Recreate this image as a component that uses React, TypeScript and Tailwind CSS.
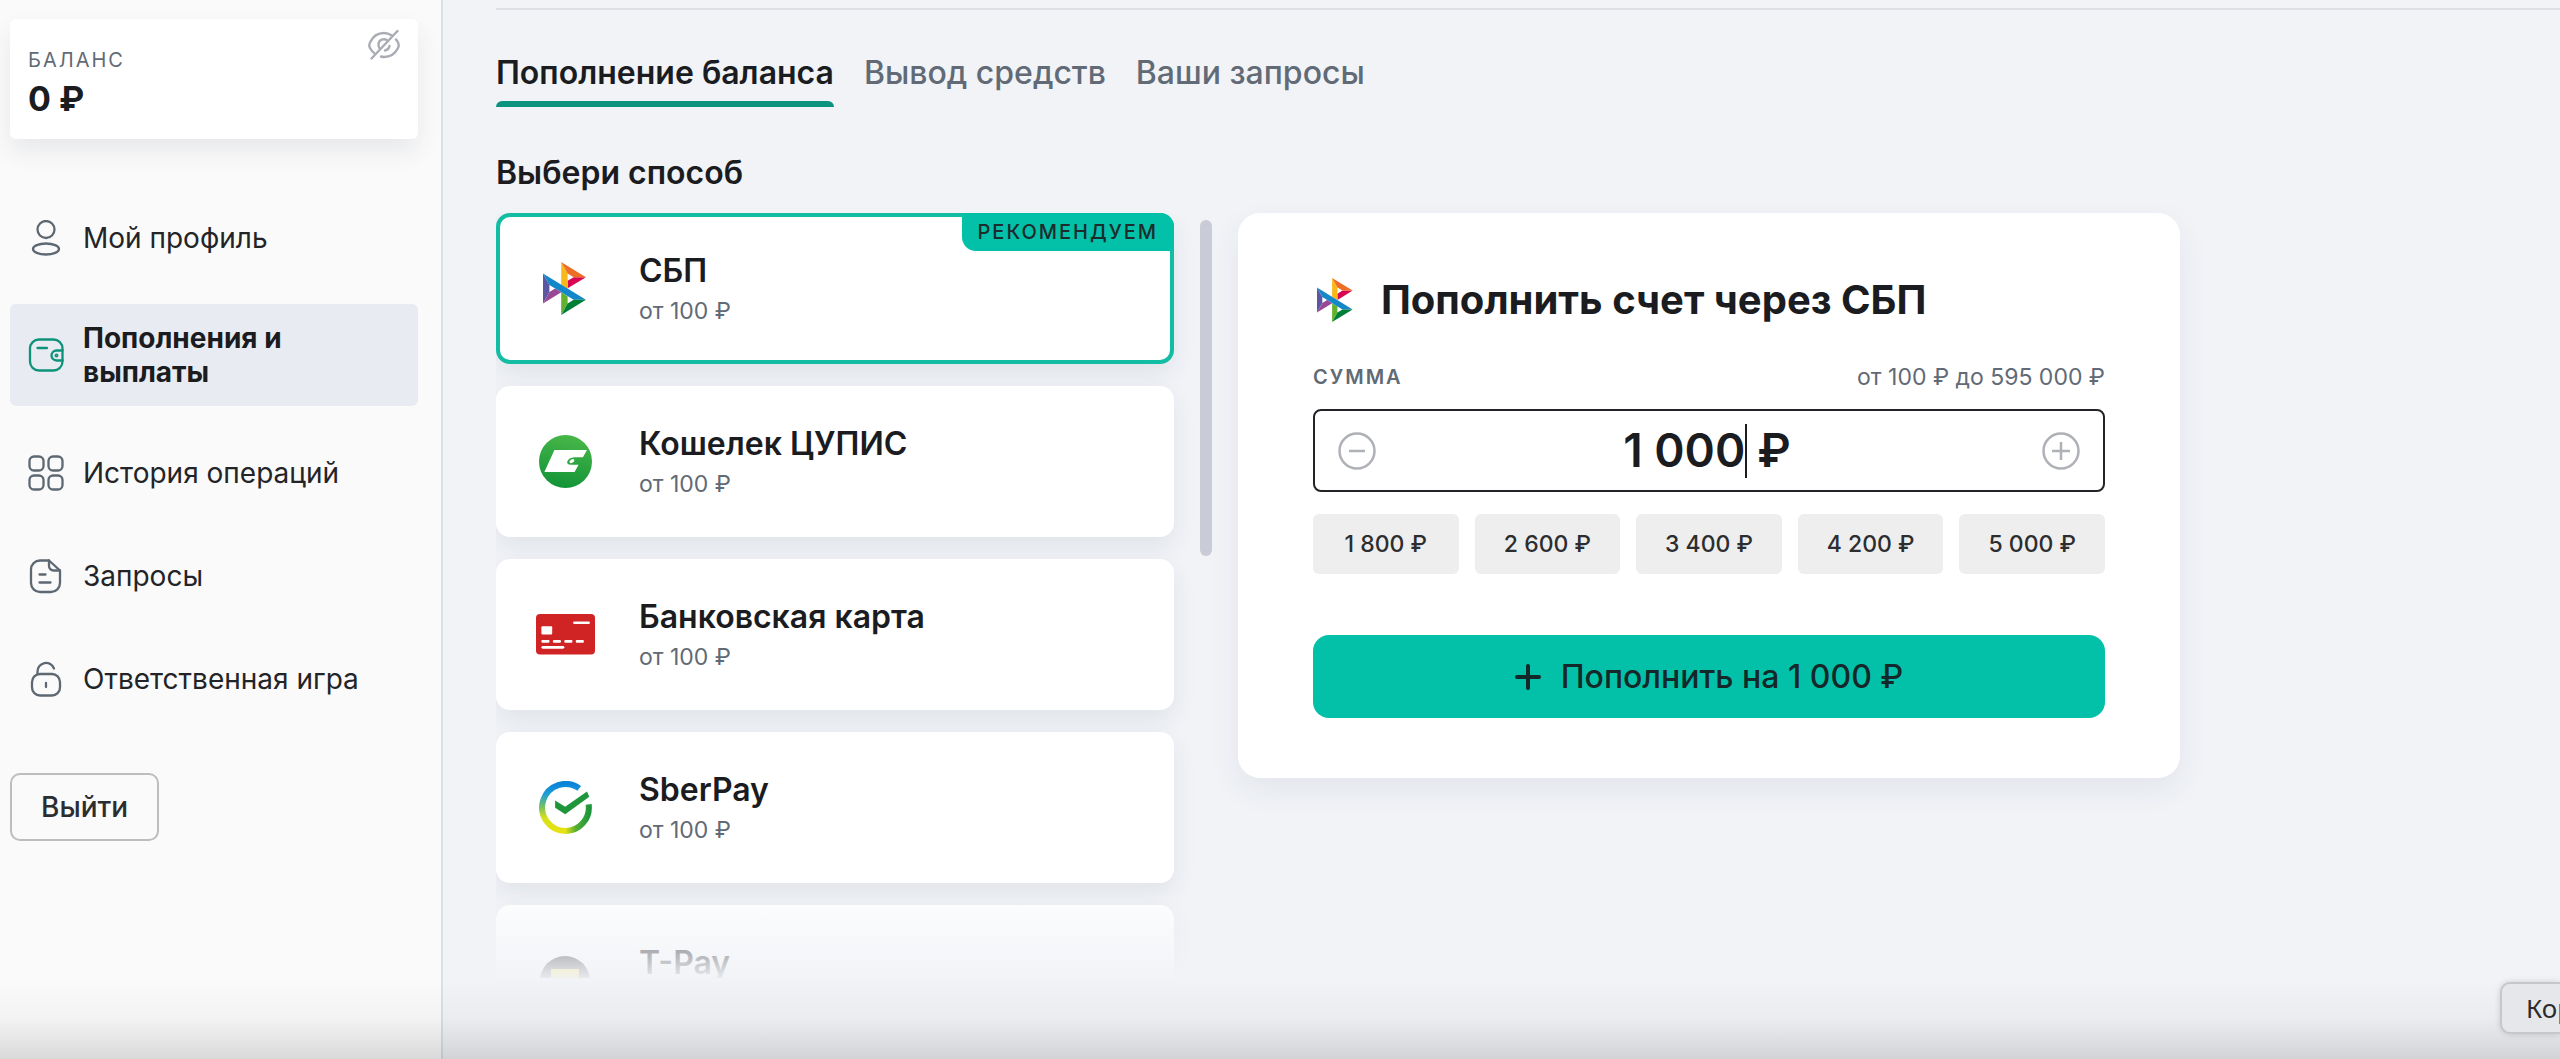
import React, { useState } from 'react';

const SbpLogo: React.FC<{ className?: string }> = ({ className }) => (
  <svg className={className} viewBox="0 0 98 120" aria-hidden="true">
    <path fill="#5B57A2" d="M0 26.12l14.532 25.975v15.844L.017 93.863 0 26.12z" />
    <path fill="#D90751" d="M55.797 42.643l13.617-8.346 27.868-.026-41.485 25.414V42.643z" />
    <path fill="#FAB718" d="M55.72 25.967l.077 34.39-14.566-8.95V0l14.49 25.967z" />
    <path fill="#ED6F26" d="M97.282 34.271l-27.869.026-13.693-8.33L41.231 0l56.05 34.271z" />
    <path fill="#63B22F" d="M55.797 94.007V77.322l-14.566-8.78.008 51.458 14.558-25.993z" />
    <path fill="#1487C9" d="M69.38 85.737L14.531 52.095 0 26.12l97.223 59.583-27.844.034z" />
    <path fill="#017F36" d="M41.24 120l14.556-25.993 13.583-8.27 27.843-.034L41.24 120z" />
    <path fill="#984995" d="M.017 93.863l41.333-25.32-13.896-8.526-12.922 7.922L.017 93.863z" />
  </svg>
);

const CupisLogo: React.FC = () => (
  <svg className="size-[53px]" viewBox="0 0 158 158" aria-hidden="true">
    <defs>
      <linearGradient id="cupis" x1="0.6" y1="0" x2="0.4" y2="1">
        <stop offset="0" stopColor="#48b748" />
        <stop offset="1" stopColor="#129338" />
      </linearGradient>
    </defs>
    <circle cx="79" cy="79" r="79" fill="url(#cupis)" />
    <path fill="#fff" d="M46 45H143L131 66H106Q88 67 84 80Q83 89 95 89H118L106 110H16Z" />
    <ellipse cx="98" cy="78" rx="8" ry="5" transform="rotate(-30 98 78)" fill="#fff" />
  </svg>
);

const CardLogo: React.FC = () => (
  <svg className="w-[59px]" viewBox="0 0 175 120" aria-hidden="true">
    <rect width="175" height="120" rx="12" fill="#d02424" />
    <g fill="#fff">
      <rect x="110" y="22" width="50" height="8" rx="4" />
      <rect x="16" y="36" width="32" height="25" rx="3" />
      <rect x="16" y="77" width="24" height="8" rx="3" />
      <rect x="50" y="77" width="24" height="8" rx="3" />
      <rect x="84" y="77" width="24" height="8" rx="3" />
      <rect x="118" y="77" width="24" height="8" rx="3" />
      <rect x="16" y="95" width="68" height="8" rx="4" />
    </g>
  </svg>
);

const SberLogo: React.FC = () => (
  <svg className="size-[53px]" viewBox="0 0 158 158" aria-hidden="true">
    <defs>
      <linearGradient id="sberLeft" x1="0" y1="0" x2="0" y2="1">
        <stop offset="0" stopColor="#0b84d8" />
        <stop offset="0.22" stopColor="#1f9fd6" />
        <stop offset="0.5" stopColor="#7cc25a" />
        <stop offset="0.72" stopColor="#d5e01c" />
        <stop offset="1" stopColor="#e6e212" />
      </linearGradient>
      <linearGradient id="sberRight" x1="0" y1="0" x2="1" y2="0">
        <stop offset="0" stopColor="#e6e212" />
        <stop offset="0.45" stopColor="#55b033" />
        <stop offset="1" stopColor="#1f963b" />
      </linearGradient>
    </defs>
    <path d="M120 22A70 70 0 1 0 79 149" fill="none" stroke="url(#sberLeft)" strokeWidth="18" />
    <path d="M78 149A70 70 0 0 0 148 70" fill="none" stroke="url(#sberRight)" strokeWidth="18" />
    <path fill="#1f963b" d="M48 58L78 77L143 31L150 47L78 99L48 80Z" />
  </svg>
);

const TPayLogo: React.FC = () => (
  <svg className="size-[50px]" viewBox="0 0 50 50" aria-hidden="true">
    <circle cx="25" cy="25" r="25" fill="#333" />
    <path fill="#ffdd2d" d="M11 13h28v12c0 6-5 11-14 14-9-3-14-8-14-14z" />
  </svg>
);

const NavIcon: React.FC<{ children: React.ReactNode; active?: boolean }> = ({ children, active }) => (
  <svg
    className={active ? 'size-9 shrink-0 text-[#0c9379]' : 'size-9 shrink-0 text-[#5d6873]'}
    viewBox="0 0 36 36"
    fill="none"
    stroke="currentColor"
    strokeWidth="2.300"
    strokeLinecap="round"
    strokeLinejoin="round"
    aria-hidden="true"
  >
    {children}
  </svg>
);

const navItems = [
  {
    label: 'Мой профиль',
    icon: (
      <>
        <circle cx="18" cy="9.5" r="8.5" />
        <ellipse cx="18" cy="29" rx="13" ry="5.5" />
      </>
    ),
  },
  {
    label: 'Пополнения и выплаты',
    active: true,
    icon: (
      <>
        <rect x="2" y="2.5" width="32.5" height="31" rx="9" />
        <path d="M9.5 11h9.5M34.5 13.5h-6a5 5 0 0 0 0 10h6" />
        <circle cx="28.5" cy="18.5" r="0.8" />
      </>
    ),
  },
  {
    label: 'История операций',
    icon: (
      <>
        <rect x="1.5" y="1.5" width="14" height="14" rx="4.5" />
        <rect x="20.5" y="1.5" width="14" height="14" rx="4.5" />
        <rect x="1.5" y="20.5" width="14" height="14" rx="4.5" />
        <rect x="20.5" y="20.5" width="14" height="14" rx="4.5" />
      </>
    ),
  },
  {
    label: 'Запросы',
    icon: (
      <>
        <path d="M21 2.5H12a9 9 0 0 0-9 9V25a9 9 0 0 0 9 9h11a9 9 0 0 0 9-9V12.5z" />
        <path d="M21 2.5V8a4.500 4.500 0 0 0 4.500 4.500H32M11.500 16.500h6M11.500 24.500h11" />
      </>
    ),
  },
  {
    label: 'Ответственная игра',
    icon: (
      <>
        <rect x="4" y="13" width="28" height="21.500" rx="8" />
        <path d="M9.500 13V10.500a8.500 8.500 0 0 1 16.500-3M18 22v4" />
      </>
    ),
  },
];

const methods = [
  { name: 'СБП', limit: 'от 100 ₽', logo: <SbpLogo className="h-[53px]" /> },
  { name: 'Кошелек ЦУПИС', limit: 'от 100 ₽', logo: <CupisLogo /> },
  { name: 'Банковская карта', limit: 'от 100 ₽', logo: <CardLogo /> },
  { name: 'SberPay', limit: 'от 100 ₽', logo: <SberLogo /> },
  { name: 'T-Pay', limit: 'от 100 ₽', logo: <TPayLogo /> },
];

const tabs = ['Пополнение баланса', 'Вывод средств', 'Ваши запросы'];
const presets = ['1 800', '2 600', '3 400', '4 200', '5 000'];

const Sidebar: React.FC = () => (
  <aside className="w-[443px] shrink-0 border-r-2 border-[#dcdfe7] bg-[#fafafa] pt-[19px] pr-[23px] pl-[10px]">
    <div className="flex h-[120px] items-start justify-between rounded-md bg-white pt-[26px] pr-[18px] pl-[18px] shadow-[0_12px_24px_rgba(40,60,90,0.09)]">
      <div>
        <div className="text-[20px] leading-[30px] tracking-[2px] text-[#616a75]">БАЛАНС</div>
        <div className="mt-1 text-[34px] leading-[40px] font-bold text-[#1b1c1f]">0 ₽</div>
      </div>
      <button type="button" aria-label="Скрыть баланс" className="-mt-4 text-[#a9adb3]">
        <svg className="size-8" viewBox="0 0 32 32" fill="none" stroke="currentColor" strokeWidth="2.400" strokeLinecap="round" aria-hidden="true">
          <path d="M24 6.500C21.500 5 19 4 16 4 9.500 4 4.500 8 2 13.500c-1 2-1 3.500 0 5.500 1 2 2.500 3.500 4 5M13 27.500c1 .3 2 .5 3 .5 6.500 0 11.500-4 14-9 1-2 1-3.500 0-5.500-.6-1.200-1.300-2.200-2-3" />
          <path d="M20 12a5.500 5.500 0 0 0-9.500 4c0 1.500.6 2.900 1.500 4M17 21.500a5.500 5.500 0 0 0 4.500-4.500M29.500 2L3.500 29.500" />
        </svg>
      </button>
    </div>

    <nav className="mt-[62px] flex flex-col gap-[30px]">
      {navItems.map((item) => (
        <a
          key={item.label}
          href="#"
          className={
            item.active
              ? 'flex min-h-[73px] items-center gap-[19px] rounded-md bg-[#e8ebf1] py-[17px] pr-20 pl-[18px] text-[28px] leading-[34px] font-bold text-[#1b1c1f]'
              : 'flex min-h-[73px] items-center gap-[19px] pl-[18px] text-[28px] leading-[34px] text-[#222427]'
          }
        >
          <NavIcon active={item.active}>{item.icon}</NavIcon>
          {item.label}
        </a>
      ))}
    </nav>

    <button type="button" className="mt-[58px] h-[68px] rounded-[10px] border-2 border-[#bcbdbf] px-[29px] text-[28px] font-medium text-[#2c2d2f]">
      Выйти
    </button>
  </aside>
);

const MethodList: React.FC = () => (
  <div className="relative h-[765px] overflow-hidden">
    <ul className="mr-[38px] flex flex-col gap-[22px]">
      {methods.map((m, i) => (
        <li key={m.name}>
          <button
            type="button"
            className={
              i === 0
                ? 'relative flex h-[151px] w-full items-center gap-11 rounded-[14px] border-4 border-[#12bda4] bg-white pl-[35px] text-left shadow-[0_10px_24px_rgba(40,50,80,0.08)]'
                : 'relative flex h-[151px] w-full items-center gap-11 rounded-[14px] bg-white pl-[39px] text-left shadow-[0_10px_24px_rgba(40,50,80,0.08)]'
            }
          >
            <span className="flex w-[60px] justify-center">{m.logo}</span>
            <span className="flex flex-col gap-2">
              <span className="text-[32px] leading-[36px] font-semibold text-[#1b1c1f]">{m.name}</span>
              <span className="text-[23px] leading-[28px] text-[#616a75]">{m.limit}</span>
            </span>
            {i === 0 && (
              <span className="absolute -top-1 -right-1 flex h-[38px] items-center rounded-tr-[14px] rounded-bl-[14px] bg-[#02c1a8] px-4 text-[20px] font-medium tracking-[2px] text-[#1c2b2c]">
                РЕКОМЕНДУЕМ
              </span>
            )}
          </button>
        </li>
      ))}
    </ul>
    <div className="absolute inset-x-0 bottom-0 h-[84px] bg-linear-to-b from-[#f1f3f7]/10 to-[#f1f3f7]/95" />
    <div className="absolute top-[7px] right-0 h-[336px] w-3 rounded-full bg-[#c9ccd6]" />
  </div>
);

const DepositForm: React.FC = () => {
  const [amount, setAmount] = useState('1 000');

  return (
    <form className="self-start rounded-[22px] bg-white px-[75px] pt-[63px] pb-[60px] shadow-[0_12px_32px_rgba(40,50,80,0.07)]">
      <h2 className="flex items-center gap-7 pl-1 text-[40px] leading-[48px] font-bold text-[#1b1c1f]">
        <SbpLogo className="h-[44px]" />
        Пополнить счет через СБП
      </h2>

      <div className="mt-[39px] flex items-center justify-between leading-[28px] text-[#616a75]">
        <label htmlFor="amount" className="text-[20px] font-semibold tracking-[2px]">СУММА</label>
        <span className="text-[23px]">от 100 ₽ до 595 000 ₽</span>
      </div>

      <div className="mt-[18px] flex h-[83px] items-center justify-between rounded-lg border-2 border-[#232427] px-[22px]">
        <button type="button" aria-label="Уменьшить" className="text-[#aeb1b6]">
          <svg className="size-10" viewBox="0 0 40 40" fill="none" stroke="currentColor" strokeWidth="2.500" aria-hidden="true">
            <circle cx="20" cy="20" r="17.500" />
            <path d="M12 20h16" />
          </svg>
        </button>
        <div className="flex items-center pr-3 text-[46px] font-semibold text-[#1b1c1f]">
          <input
            id="amount"
            value={amount}
            onChange={(e) => setAmount(e.target.value)}
            className="w-[130px] bg-transparent text-right outline-none"
          />
          <span className="h-[54px] w-[2px] bg-[#1b1c1f]" />
          <span className="ml-[10px]">₽</span>
        </div>
        <button type="button" aria-label="Увеличить" className="text-[#aeb1b6]">
          <svg className="size-10" viewBox="0 0 40 40" fill="none" stroke="currentColor" strokeWidth="2.500" aria-hidden="true">
            <circle cx="20" cy="20" r="17.500" />
            <path d="M11 20h18M20 11v18" />
          </svg>
        </button>
      </div>

      <div className="mt-[22px] grid grid-cols-5 gap-4">
        {presets.map((p) => (
          <button
            key={p}
            type="button"
            onClick={() => setAmount(p)}
            className="h-[60px] rounded-md bg-[#eeeeee] text-[23px] font-medium text-[#2c2d2f]"
          >
            {p} ₽
          </button>
        ))}
      </div>

      <button
        type="submit"
        className="mt-[61px] flex h-[83px] w-full items-center justify-center gap-5 rounded-2xl bg-[#02c1a8] text-[32px] font-medium text-[#14282a]"
      >
        <svg className="size-[26px]" viewBox="0 0 26 26" stroke="currentColor" strokeWidth="4" strokeLinecap="round" aria-hidden="true">
          <path d="M2 13h22M13 2v22" />
        </svg>
        Пополнить на {amount} ₽
      </button>
    </form>
  );
};

const App: React.FC = () => {
  const [tab, setTab] = useState(0);

  return (
    <div className="relative flex h-screen overflow-hidden bg-[#f1f3f7] font-['Inter','Liberation_Sans',sans-serif]">
      <Sidebar />

      <main className="min-w-0 flex-1 pt-2 pl-[53px]">
        <hr className="border-t-2 border-[#dddfe4]" />

        <div role="tablist" className="mt-[43px] flex gap-[30px] text-[32px] leading-[40px]">
          {tabs.map((t, i) => (
            <button
              key={t}
              type="button"
              role="tab"
              aria-selected={tab === i}
              onClick={() => setTab(i)}
              className={tab === i ? 'font-semibold text-[#1b1c1f]' : 'font-medium text-[#616a75]'}
            >
              {t}
              <span className={tab === i ? 'mt-2 block h-[6px] rounded-t-md bg-[#0c9380]' : 'mt-2 block h-[6px]'} />
            </button>
          ))}
        </div>

        <h1 className="mt-[46px] text-[32px] leading-[40px] font-semibold text-[#1b1c1f]">Выбери способ</h1>

        <div className="mt-5 grid max-w-[1684px] grid-cols-[716fr_942fr] gap-[26px]">
          <MethodList />
          <DepositForm />
        </div>
      </main>

      {/* shade along the bottom edge */}
      <div className="pointer-events-none absolute inset-x-0 bottom-0 h-20 bg-linear-to-b from-black/0 via-black/3 to-black/13" />

      <button
        type="button"
        className="absolute right-0 bottom-[25px] h-[52px] w-[60px] overflow-hidden rounded-l-[10px] border-2 border-r-0 border-[#c6c7cb] bg-[#e6e7ea] pl-6 text-left font-['Noto_Sans',sans-serif] text-[26px] whitespace-nowrap text-[#2b2c2e] shadow-[0_0_6px_rgba(0,0,0,0.15)]"
      >
        Корзина
      </button>
    </div>
  );
};

export default App;
